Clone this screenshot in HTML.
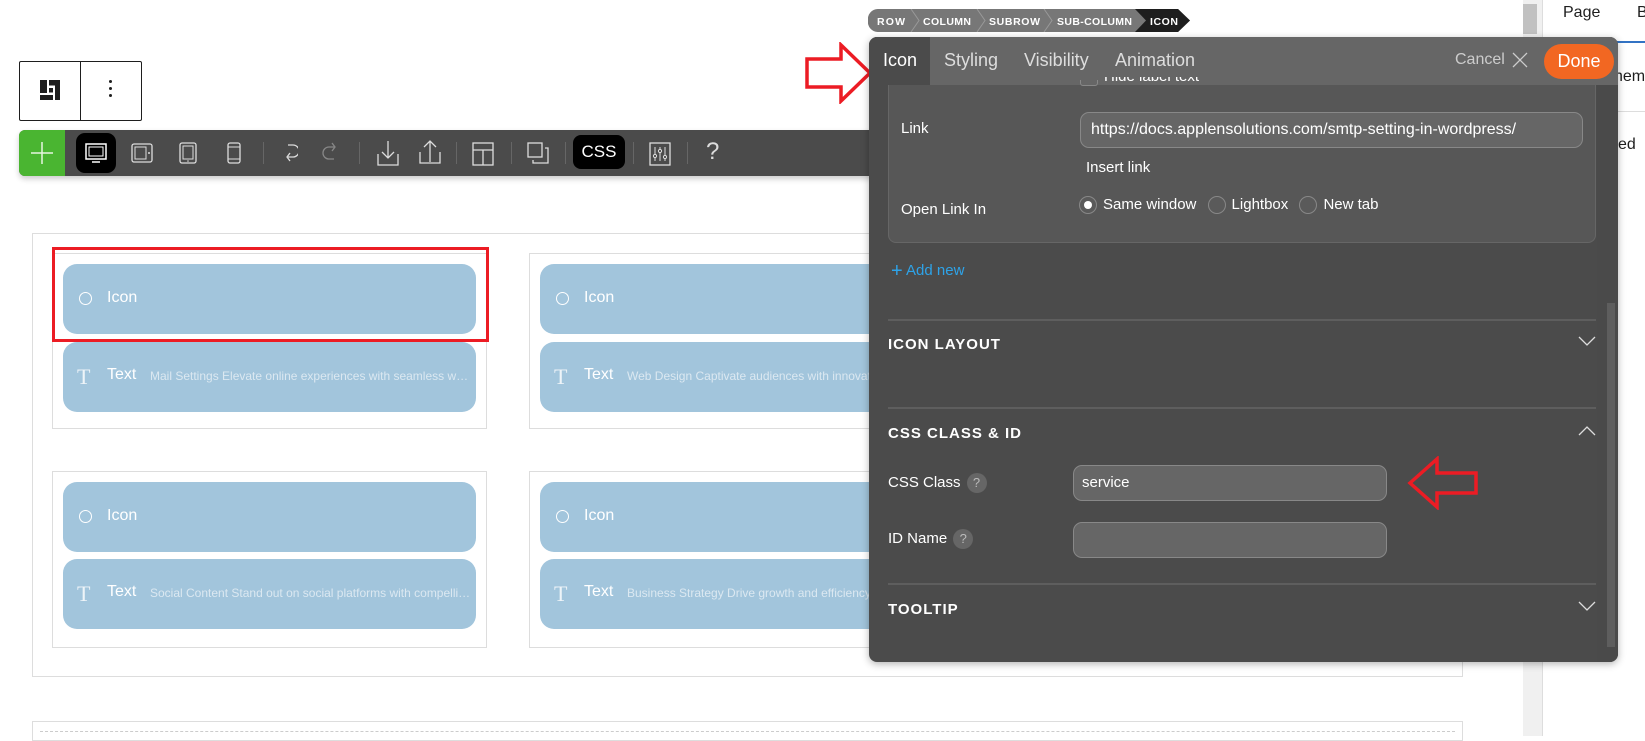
<!DOCTYPE html>
<html><head><meta charset="utf-8"><style>
*{box-sizing:border-box;margin:0;padding:0}
body{width:1645px;height:736px;overflow:hidden;background:#fff;font-family:"Liberation Sans",sans-serif;position:relative}
.a{position:absolute}
.card{position:absolute;background:#a2c5dc;border-radius:14px;color:#fff;font-size:16px}
.card .c{position:absolute;left:16px;top:28px;width:13px;height:13px;border:1.5px solid #fff;border-radius:50%}
.card .l{position:absolute;left:44px;top:25px}
.card .t{position:absolute;left:14px;top:22px;font-family:"Liberation Serif",serif;font-size:22px;color:#eef4f8}
.card .d{position:absolute;left:87px;top:27px;font-size:12px;color:#dbe8f1;white-space:nowrap;overflow:hidden;text-overflow:ellipsis}
.col{position:absolute;border:1px solid #ddd}
.sep{position:absolute;top:142px;width:1px;height:22px;background:#666}
.lbl{position:absolute;color:#fff;font-size:15px}
.hd{position:absolute;color:#fff;font-size:15px;font-weight:bold;letter-spacing:1px;left:888px}
.hr{position:absolute;left:888px;width:708px;height:2px;background:#5e5e5e}
.inp{position:absolute;background:#666;border:1px solid #888;border-radius:9px;color:#fff;font-size:15px}
.q{display:inline-block;width:20px;height:20px;border-radius:50%;background:#666;color:#bbb;font-size:13px;text-align:center;line-height:20px;margin-left:6px;vertical-align:middle}
.rad{display:inline-block;width:18px;height:18px;border-radius:50%;border:1px solid #888;background:#5a5a5a;vertical-align:middle;margin-right:6px;position:relative}
</style></head><body>

<!-- right sidebar -->
<div class="a" style="left:1523px;top:0;width:19px;height:736px;background:#f0f0f0"></div>
<div class="a" style="left:1523px;top:4px;width:14px;height:30px;background:#c1c1c1"></div>
<div class="a" style="left:1542px;top:0;width:103px;height:736px;background:#fff;border-left:1px solid #ddd"></div>
<div class="a" style="left:1563px;top:4px;font-size:16px;color:#1e1e1e">Page</div>
<div class="a" style="left:1637px;top:4px;font-size:16px;color:#1e1e1e">B</div>
<div class="a" style="left:1542px;top:41px;width:103px;height:2px;background:#3373c4"></div>
<div class="a" style="left:1542px;top:111px;width:103px;height:1px;background:#ddd"></div>
<div class="a" style="left:1614px;top:68px;font-size:16px;color:#1e1e1e">hem</div>
<div class="a" style="left:1618px;top:136px;font-size:16px;color:#1e1e1e">ed</div>

<!-- top-left block toolbar -->
<div class="a" style="left:19px;top:61px;width:123px;height:60px;border:1px solid #1e1e1e;border-radius:2px"></div>
<div class="a" style="left:80px;top:61px;width:1px;height:60px;background:#1e1e1e"></div>
<svg class="a" style="left:40px;top:80px" width="20" height="20"><path d="M0 0h7v13h-7z M9 0h11v6h-11z M15 0h5v20h-5z M9 8h4v5h-4z M0 15h13v5h-13z" fill="#1e1e1e"/><path d="M9 6h6 M9 13h6" stroke="#fff"/></svg>
<div class="a" style="left:109px;top:80px;width:3px;height:3px;background:#1e1e1e;border-radius:50%;box-shadow:0 7px 0 #1e1e1e,0 14px 0 #1e1e1e"></div>

<!-- main toolbar -->
<div class="a" style="left:19px;top:130px;width:860px;height:46px;background:#4b4b4b;border-radius:6px;box-shadow:0 3px 6px rgba(0,0,0,.2)"></div>
<div class="a" style="left:19px;top:130px;width:46px;height:46px;background:#4ab531;border-radius:6px 0 0 6px"></div>
<svg class="a" style="left:30px;top:141px" width="24" height="24"><path d="M12 1v22M1 12h22" stroke="#e6f5e0" stroke-width="1.5"/></svg>
<div class="a" style="left:76px;top:133px;width:40px;height:40px;background:#000;border-radius:9px"></div>
<svg class="a" style="left:84px;top:143px" width="24" height="22"><rect x="2" y="1" width="20" height="15" fill="none" stroke="#fff" stroke-width="1.5"/><rect x="5" y="4" width="14" height="9" fill="none" stroke="#fff"/><path d="M8 19h8" stroke="#fff" stroke-width="1.5"/></svg>
<svg class="a" style="left:131px;top:143px" width="22" height="20"><rect x="1" y="1" width="20" height="18" rx="2" fill="none" stroke="#ddd" stroke-width="1.3"/><rect x="4" y="4" width="11" height="12" fill="none" stroke="#ddd"/><circle cx="18" cy="10" r="1" fill="#ddd"/></svg>
<svg class="a" style="left:179px;top:142px" width="18" height="22"><rect x="1" y="1" width="16" height="20" rx="2" fill="none" stroke="#ddd" stroke-width="1.3"/><rect x="4" y="4" width="10" height="13" fill="none" stroke="#ddd"/><circle cx="9" cy="19" r=".8" fill="#ddd"/></svg>
<svg class="a" style="left:227px;top:142px" width="14" height="22"><rect x="1" y="1" width="12" height="20" rx="2" fill="none" stroke="#ddd" stroke-width="1.3"/><path d="M1 5h12M1 17h12" stroke="#ddd"/></svg>
<div class="sep" style="left:263px"></div>
<svg class="a" style="left:282px;top:140px" width="16" height="24"><path d="M4 3h5a6 6 0 0 1 0 12H4M6 11l-3 4 3 4" fill="none" stroke="#ddd" stroke-width="1.3" transform="translate(2,2)"/></svg>
<svg class="a" style="left:322px;top:140px" width="16" height="24"><path d="M12 5H7a6 6 0 0 0 0 12h5M10 1l3 4-3 4" fill="none" stroke="#888" stroke-width="1.3" transform="translate(0,2)"/></svg>
<div class="sep" style="left:359px"></div>
<svg class="a" style="left:377px;top:140px" width="22" height="26"><path d="M11 1v17M5 12l6 6 6-6M1 14v11h20V14" fill="none" stroke="#ddd" stroke-width="1.3"/></svg>
<svg class="a" style="left:419px;top:138px" width="22" height="26"><path d="M11 24V4M5 9l6-6 6 6M1 14v11h20V14" fill="none" stroke="#ddd" stroke-width="1.3"/></svg>
<div class="sep" style="left:456px"></div>
<svg class="a" style="left:472px;top:142px" width="22" height="24"><rect x="1" y="1" width="20" height="22" fill="none" stroke="#ddd" stroke-width="1.3"/><path d="M1 8h20M11 8v15" stroke="#ddd" stroke-width="1.3"/></svg>
<div class="sep" style="left:511px"></div>
<svg class="a" style="left:527px;top:142px" width="22" height="22"><rect x="1" y="1" width="14" height="14" fill="none" stroke="#ddd" stroke-width="1.3"/><path d="M18 6h3v15H6v-3" fill="none" stroke="#ddd" stroke-width="1.3"/></svg>
<div class="sep" style="left:565px"></div>
<div class="a" style="left:573px;top:135px;width:52px;height:34px;background:#000;border-radius:8px;color:#fff;font-size:17px;text-align:center;line-height:34px">CSS</div>
<div class="sep" style="left:633px"></div>
<svg class="a" style="left:649px;top:142px" width="22" height="24"><rect x="1" y="1" width="20" height="22" fill="none" stroke="#ddd" stroke-width="1.3"/><path d="M6 5v14M11 5v14M16 5v14" stroke="#ddd"/><circle cx="6" cy="14" r="1.6" fill="#4b4b4b" stroke="#ddd"/><circle cx="11" cy="9" r="1.6" fill="#4b4b4b" stroke="#ddd"/><circle cx="16" cy="15" r="1.6" fill="#4b4b4b" stroke="#ddd"/></svg>
<div class="sep" style="left:687px"></div>
<div class="a" style="left:706px;top:138px;color:#ddd;font-size:24px;font-weight:300">?</div>

<!-- canvas content -->
<div class="a" style="left:32px;top:233px;width:1431px;height:444px;border:1px solid #ddd"></div>
<div class="a" style="left:32px;top:721px;width:1431px;height:20px;border:1px solid #ddd"></div>
<div class="a" style="left:40px;top:731px;width:1415px;height:10px;border-top:1px dashed #ccc"></div>

<div class="col" style="left:52px;top:253px;width:435px;height:176px"></div>
<div class="col" style="left:529px;top:253px;width:435px;height:176px"></div>
<div class="col" style="left:52px;top:471px;width:435px;height:177px"></div>
<div class="col" style="left:529px;top:471px;width:435px;height:177px"></div>

<div class="card" style="left:63px;top:264px;width:413px;height:70px"><span class="c"></span><span class="l">Icon</span></div>
<div class="card" style="left:63px;top:342px;width:413px;height:70px"><span class="t">T</span><span class="l" style="top:24px">Text</span><span class="d" style="width:324px">Mail Settings Elevate online experiences with seamless web design</span></div>
<div class="card" style="left:540px;top:264px;width:413px;height:70px"><span class="c"></span><span class="l">Icon</span></div>
<div class="card" style="left:540px;top:342px;width:413px;height:70px"><span class="t">T</span><span class="l" style="top:24px">Text</span><span class="d" style="width:324px">Web Design Captivate audiences with innovative designs</span></div>
<div class="card" style="left:63px;top:482px;width:413px;height:70px"><span class="c"></span><span class="l">Icon</span></div>
<div class="card" style="left:63px;top:559px;width:413px;height:70px"><span class="t">T</span><span class="l" style="top:24px">Text</span><span class="d" style="width:324px">Social Content Stand out on social platforms with compelling content</span></div>
<div class="card" style="left:540px;top:482px;width:413px;height:70px"><span class="c"></span><span class="l">Icon</span></div>
<div class="card" style="left:540px;top:559px;width:413px;height:70px"><span class="t">T</span><span class="l" style="top:24px">Text</span><span class="d" style="width:324px">Business Strategy Drive growth and efficiency with strategy</span></div>

<div class="a" style="left:52px;top:247px;width:437px;height:95px;border:3px solid #ec1c24"></div>

<!-- red arrow left of panel -->
<svg class="a" style="left:804px;top:42px" width="70" height="62"><path d="M3 17h34V3l29 28-29 28V45H3z" fill="none" stroke="#ec1c24" stroke-width="3.5"/></svg>

<!-- breadcrumb -->
<svg class="a" style="left:868px;top:9px" width="326" height="23">
<path d="M10 0H310l12 11.5L310 23H10A10 10 0 0 1 0 11.5 10 10 0 0 1 10 0z" fill="#777"/>
<path d="M267 0H310l12 11.5L310 23H267l11-11.5z" fill="#1e1e1e"/>
<path d="M43 0l8 11.5-8 11.5M109 0l8 11.5-8 11.5M176 0l8 11.5-8 11.5" fill="none" stroke="#999"/>
<g fill="#fff" font-family="Liberation Sans" font-size="10.5" font-weight="bold"><text x="9" y="16" textLength="28">ROW</text><text x="55" y="16" textLength="48">COLUMN</text><text x="121" y="16" textLength="51">SUBROW</text><text x="189" y="16" textLength="75">SUB-COLUMN</text><text x="282" y="16" textLength="28">ICON</text></g>
</svg>

<!-- panel -->
<div class="a" style="left:869px;top:37px;width:749px;height:625px;background:#4b4b4b;border-radius:8px;box-shadow:0 2px 8px rgba(0,0,0,.3);overflow:hidden">
 <div class="a" style="left:0;top:0;width:749px;height:48px;background:#666"></div>
 <div class="a" style="left:0;top:0;width:61px;height:48px;background:#4b4b4b"></div>
</div>
<div class="a" style="left:1597px;top:85px;width:21px;height:577px;background:#4a4a4a;border-radius:0 0 8px 0"></div>
<div class="a" style="left:1607px;top:303px;width:8px;height:344px;background:#5e5e5e"></div>
<div class="a" style="left:883px;top:50px;color:#fff;font-size:18px">Icon</div>
<div class="a" style="left:944px;top:50px;color:#ddd;font-size:18px">Styling</div>
<div class="a" style="left:1024px;top:50px;color:#ddd;font-size:18px">Visibility</div>
<div class="a" style="left:1115px;top:50px;color:#ddd;font-size:18px">Animation</div>
<div class="a" style="left:1455px;top:51px;color:#ccc;font-size:16px">Cancel</div>
<svg class="a" style="left:1512px;top:52px" width="16" height="16"><path d="M1 1l14 14M15 1L1 15" stroke="#ccc" stroke-width="1.3"/></svg>
<div class="a" style="left:1544px;top:44px;width:70px;height:35px;background:#f26722;border-radius:18px;color:#fff;font-size:18px;text-align:center;line-height:34px">Done</div>

<div class="a" style="left:888px;top:85px;width:708px;height:158px;border:1px solid #666;border-top:none;border-radius:0 0 8px 8px;background:#575757"></div>
<div class="a" style="left:1080px;top:80px;width:18px;height:6px;border:1px solid #888;border-top:none;border-radius:0 0 3px 3px"></div>
<div class="a" style="left:1104px;top:77px;width:110px;height:8px;overflow:hidden;color:#fff;font-size:15px;line-height:1"><div style="margin-top:-8px">Hide label text</div></div>
<div class="lbl" style="left:901px;top:120px">Link</div>
<div class="inp" style="left:1080px;top:112px;width:503px;height:36px;padding:8px 10px;font-size:16px">https://docs.applensolutions.com/smtp-setting-in-wordpress/</div>
<div class="lbl" style="left:1086px;top:159px">Insert link</div>
<div class="lbl" style="left:901px;top:201px">Open Link In</div>
<div class="lbl" style="left:1079px;top:196px;white-space:nowrap"><span class="rad"><span style="position:absolute;left:4px;top:4px;width:8px;height:8px;border-radius:50%;background:#fff"></span></span>Same window <span class="rad" style="margin-left:7px"></span>Lightbox <span class="rad" style="margin-left:7px"></span>New tab</div>
<div class="a" style="left:891px;top:260px;color:#2ea3e8;font-size:15px"><span style="font-size:20px;vertical-align:-2px">+</span> Add new</div>

<div class="hr" style="top:319px"></div>
<div class="hd" style="top:336px">ICON LAYOUT</div>
<svg class="a" style="left:1578px;top:336px" width="18" height="11"><path d="M1 1l8 8 8-8" fill="none" stroke="#ddd" stroke-width="1.3"/></svg>
<div class="hr" style="top:407px"></div>
<div class="hd" style="top:425px">CSS CLASS &amp; ID</div>
<svg class="a" style="left:1578px;top:425px" width="18" height="11"><path d="M1 10l8-8 8 8" fill="none" stroke="#ddd" stroke-width="1.3"/></svg>
<div class="lbl" style="left:888px;top:473px">CSS Class<span class="q">?</span></div>
<div class="inp" style="left:1073px;top:465px;width:314px;height:36px;padding:8px 8px">service</div>
<svg class="a" style="left:1407px;top:456px" width="74" height="54"><path d="M3 27L30 3v14h39v20H30v14z" fill="none" stroke="#ec1c24" stroke-width="3.5"/></svg>
<div class="lbl" style="left:888px;top:529px">ID Name<span class="q">?</span></div>
<div class="inp" style="left:1073px;top:522px;width:314px;height:36px"></div>
<div class="hr" style="top:583px"></div>
<div class="hd" style="top:601px">TOOLTIP</div>
<svg class="a" style="left:1578px;top:601px" width="18" height="11"><path d="M1 1l8 8 8-8" fill="none" stroke="#ddd" stroke-width="1.3"/></svg>
</body></html>
